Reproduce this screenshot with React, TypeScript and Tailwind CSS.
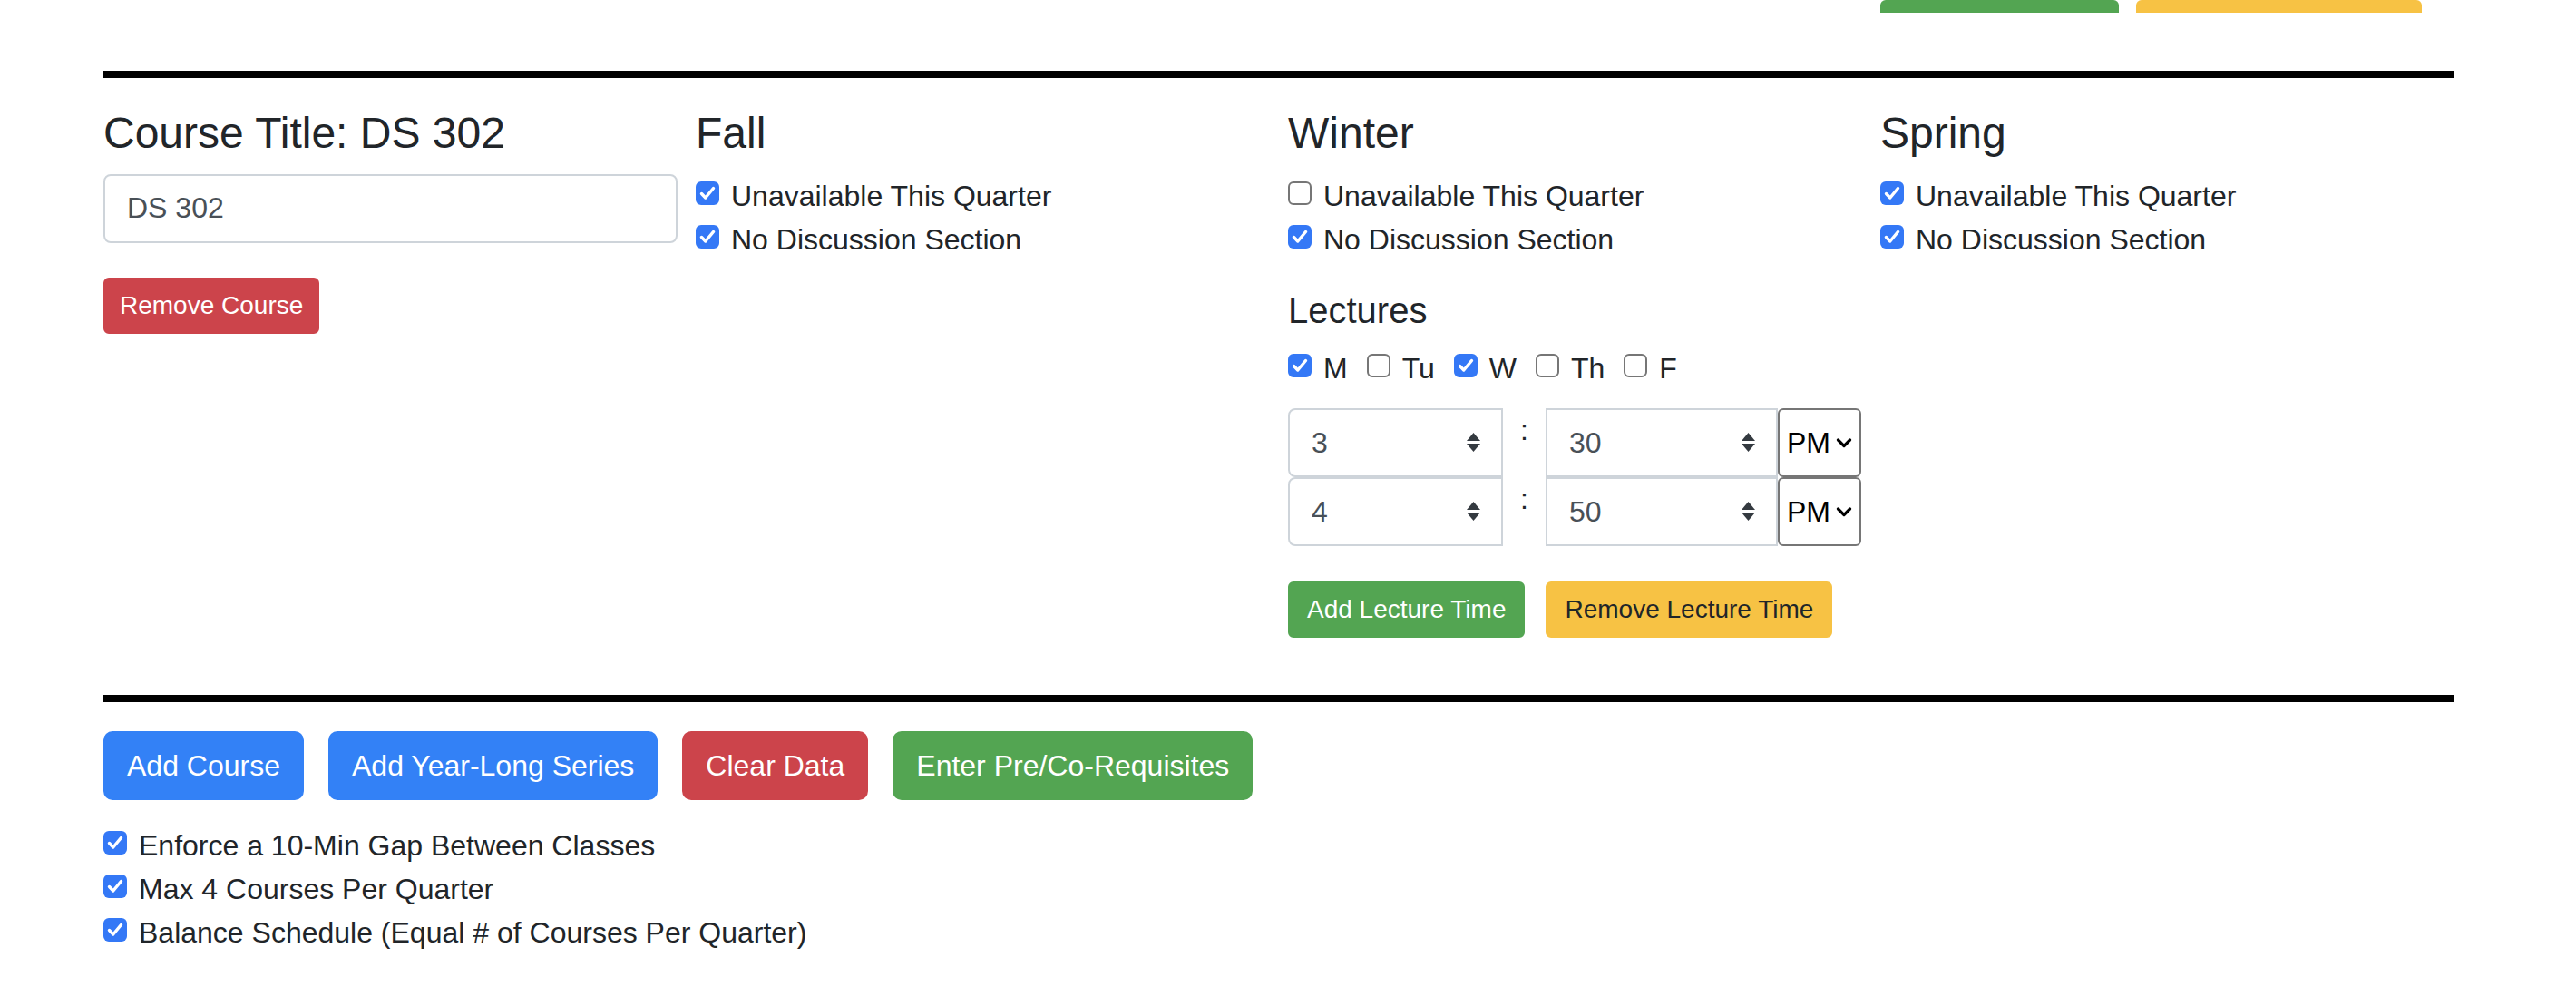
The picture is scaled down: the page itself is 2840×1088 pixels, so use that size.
import React from "react";

function Check({ checked }: { checked: boolean }) {
  if (!checked) {
    return (
      <span className="mt-[8px] block h-[26px] w-[26px] shrink-0 rounded-[6px] border-2 border-[#767676] bg-white" />
    );
  }
  return (
    <span className="mt-[8px] flex h-[26px] w-[26px] shrink-0 items-center justify-center rounded-[6px] bg-[#3478f6]">
      <svg width="26" height="26" viewBox="0 0 26 26" fill="none">
        <path d="M6.5 13.5 L10.8 18 L19.5 7.5" stroke="white" strokeWidth="3.4" strokeLinecap="round" strokeLinejoin="round" />
      </svg>
    </span>
  );
}

function CheckRow({ checked, label }: { checked: boolean; label: string }) {
  return (
    <div className="flex h-[48px] items-start gap-[13px] leading-[48px]">
      <Check checked={checked} />
      <span>{label}</span>
    </div>
  );
}

function Spinner() {
  return (
    <svg width="15" height="21" viewBox="0 0 15 21" className="shrink-0">
      <path d="M7.5 0 L15 9 L0 9 Z" fill="#343a40" />
      <path d="M0 12 L15 12 L7.5 21 Z" fill="#343a40" />
    </svg>
  );
}

function TimeRow({ hour, minute }: { hour: string; minute: string }) {
  return (
    <div className="flex items-start">
      <div className="flex h-[76px] w-[237px] items-center justify-between rounded-l-[8px] border-2 border-[#ced4da] bg-white pl-[24px] pr-[23px] text-[#495057]">
        <span>{hour}</span>
        <Spinner />
      </div>
      <span className="w-[47px] text-center leading-[48px]">:</span>
      <div className="flex h-[76px] w-[256px] items-center justify-between border-2 border-[#ced4da] bg-white pl-[24px] pr-[23px] text-[#495057]">
        <span>{minute}</span>
        <Spinner />
      </div>
      <div className="flex h-[76px] w-[92px] items-center justify-between rounded-[6px] border-2 border-[#767676] bg-white pl-[8px] pr-[8px] text-black">
        <span>PM</span>
        <svg width="18" height="12" viewBox="0 0 18 12" fill="none">
          <path d="M2.5 3 L9 9.5 L15.5 3" stroke="black" strokeWidth="3.2" strokeLinecap="round" strokeLinejoin="round" />
        </svg>
      </div>
    </div>
  );
}

export default function App() {
  const days = [
    { d: "M", on: true },
    { d: "Tu", on: false },
    { d: "W", on: true },
    { d: "Th", on: false },
    { d: "F", on: false },
  ];

  return (
    <div className="min-h-[1088px] w-[2840px] bg-white font-['Liberation_Sans',Arial,sans-serif] text-[32px] text-[#212529]">
      <div className="ml-[114px] w-[2592px]">
        {/* tail of the previous course block */}
        <div className="grid h-[14px] grid-cols-4 gap-x-[20px] overflow-hidden">
          <div className="col-start-4 flex items-end gap-[19px]">
            <div className="h-[62px] w-[263px] shrink-0 rounded-[6px] bg-[#53a552]" />
            <div className="h-[62px] w-[315px] shrink-0 rounded-[6px] bg-[#f7c244]" />
          </div>
        </div>

        <div className="mt-[64px] h-[8px] bg-black" />

        {/* course block */}
        <div className="mt-[32px] grid grid-cols-4 gap-x-[20px]">
          <div>
            <h4 className="mb-[16px] text-[48px] font-medium leading-[1.2]">Course Title: DS 302</h4>
            <input
              readOnly
              value="DS 302"
              className="block h-[76px] w-full rounded-[8px] border-2 border-[#ced4da] bg-white px-[24px] text-[32px] text-[#495057] outline-none"
            />
            <button className="mt-[38px] h-[62px] rounded-[6px] border-2 border-[#cc444b] bg-[#cc444b] px-[16px] text-[28px] leading-[42px] text-white">
              Remove Course
            </button>
          </div>

          <div>
            <h4 className="mb-[16px] text-[48px] font-medium leading-[1.2]">Fall</h4>
            <CheckRow checked label="Unavailable This Quarter" />
            <CheckRow checked label="No Discussion Section" />
          </div>

          <div>
            <h4 className="mb-[16px] text-[48px] font-medium leading-[1.2]">Winter</h4>
            <CheckRow checked={false} label="Unavailable This Quarter" />
            <CheckRow checked label="No Discussion Section" />

            <h5 className="mb-[16px] mt-[30px] text-[40px] font-medium leading-[48px]">Lectures</h5>
            <div className="flex h-[48px] items-start gap-[21px] leading-[48px]">
              {days.map((x) => (
                <div key={x.d} className="flex items-start gap-[13px]">
                  <Check checked={x.on} />
                  <span>{x.d}</span>
                </div>
              ))}
            </div>

            <div className="mt-[20px]">
              <TimeRow hour="3" minute="30" />
              <TimeRow hour="4" minute="50" />
            </div>

            <div className="mt-[39px] flex gap-[23px]">
              <button className="h-[62px] rounded-[6px] border-2 border-[#53a552] bg-[#53a552] px-[19px] text-[28px] leading-[42px] text-white">
                Add Lecture Time
              </button>
              <button className="h-[62px] rounded-[6px] border-2 border-[#f7c244] bg-[#f7c244] px-[19px] text-[28px] leading-[42px] text-[#212529]">
                Remove Lecture Time
              </button>
            </div>
          </div>

          <div>
            <h4 className="mb-[16px] text-[48px] font-medium leading-[1.2]">Spring</h4>
            <CheckRow checked label="Unavailable This Quarter" />
            <CheckRow checked label="No Discussion Section" />
          </div>
        </div>

        <div className="mt-[63px] h-[8px] bg-black" />

        {/* actions */}
        <div className="mt-[32px] flex gap-[27px]">
          <button className="h-[76px] rounded-[10px] border-2 border-[#3381f6] bg-[#3381f6] px-[24px] text-[32px] leading-[48px] text-white">
            Add Course
          </button>
          <button className="h-[76px] rounded-[10px] border-2 border-[#3381f6] bg-[#3381f6] px-[24px] text-[32px] leading-[48px] text-white">
            Add Year-Long Series
          </button>
          <button className="h-[76px] rounded-[10px] border-2 border-[#cc444b] bg-[#cc444b] px-[24px] text-[32px] leading-[48px] text-white">
            Clear Data
          </button>
          <button className="h-[76px] rounded-[10px] border-2 border-[#53a552] bg-[#53a552] px-[24px] text-[32px] leading-[48px] text-white">
            Enter Pre/Co-Requisites
          </button>
        </div>

        <div className="mt-[26px]">
          <CheckRow checked label="Enforce a 10-Min Gap Between Classes" />
          <CheckRow checked label="Max 4 Courses Per Quarter" />
          <CheckRow checked label="Balance Schedule (Equal # of Courses Per Quarter)" />
        </div>
      </div>
    </div>
  );
}
